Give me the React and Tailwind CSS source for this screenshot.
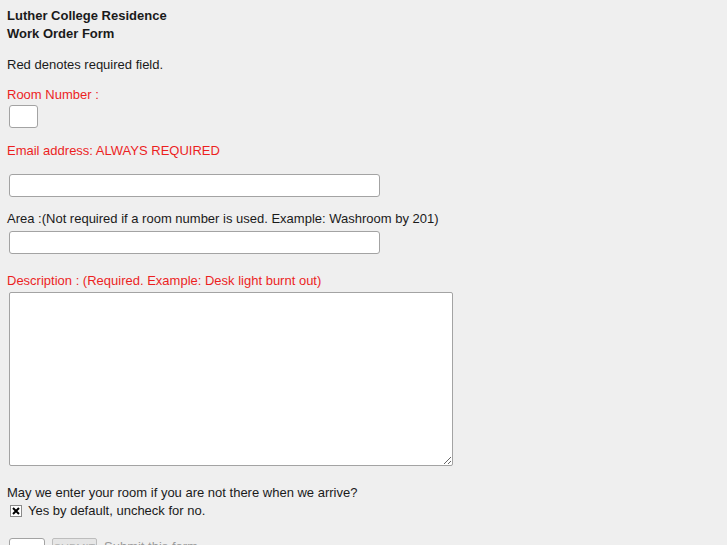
export default function App() {
  return (
    <div
      className="min-h-[545px] bg-[#efefef] pl-[7px] pt-[7px] text-[13px] leading-[18px] text-[#1a1a1a]"
      style={{ fontFamily: '"Liberation Sans", Arial, sans-serif' }}
    >
      {/* Header */}
      <div className="font-bold">
        <div>Luther College Residence</div>
        <div>Work Order Form</div>
      </div>

      <div className="mt-[13px]">Red denotes required field.</div>

      {/* Room number */}
      <div className="mt-[12px] text-[#ec1f1f]">Room Number :</div>
      <input
        type="text"
        className="ml-[2px] mt-[1px] block h-[23px] w-[29px] rounded-[3px] border border-[#a3a3a3] bg-white"
      />

      {/* Email */}
      <div className="mt-[14px] text-[#ec1f1f]">Email address: ALWAYS REQUIRED</div>
      <input
        type="text"
        className="ml-[2px] mt-[14px] block h-[23px] w-[371px] rounded-[3px] border border-[#a3a3a3] bg-white"
      />

      {/* Area */}
      <div className="mt-[13px]">
        Area :(Not required if a room number is used. Example: Washroom by 201)
      </div>
      <input
        type="text"
        className="ml-[2px] mt-[3px] block h-[23px] w-[371px] rounded-[3px] border border-[#a3a3a3] bg-white"
      />

      {/* Description */}
      <div className="mt-[18px] text-[#ec1f1f]">
        Description : (Required. Example: Desk light burnt out)
      </div>
      <textarea className="ml-[2px] mt-[2px] block h-[174px] w-[444px] rounded-[2px] border border-[#a3a3a3] bg-white" />

      {/* Entry permission */}
      <div className="mt-[18px]">May we enter your room if you are not there when we arrive?</div>
      <label className="flex items-center gap-[6px] pl-[3px]">
        <span className="flex h-[12px] w-[12px] items-center justify-center border border-[#8a8a8a] bg-white">
          <svg width="8" height="8" viewBox="0 0 8 8">
            <path d="M1 1 L7 7 M7 1 L1 7" stroke="#000" strokeWidth="2" />
          </svg>
        </span>
        <span>Yes by default, uncheck for no.</span>
      </label>

      {/* Bottom row */}
      <div className="mt-[18px] flex items-start gap-[7px] pl-[2px]">
        <input
          type="text"
          className="h-[23px] w-[36px] rounded-[3px] border border-[#a3a3a3] bg-white"
        />
        <div className="h-[23px] w-[45px] rounded-[2px] border border-[#bdbdbd] bg-[#e6e6e6] text-center text-[11px] text-[#b0b0b0]">
          SUBMIT
        </div>
        <span className="text-[#9a9a9a]">Submit this form</span>
      </div>
    </div>
  );
}
